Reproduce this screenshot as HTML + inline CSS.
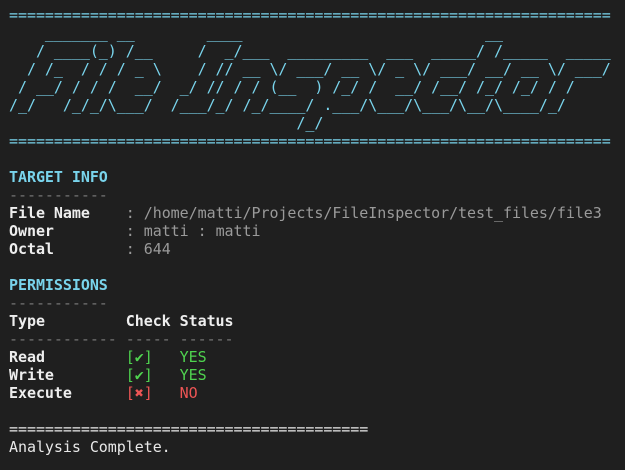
<!DOCTYPE html>
<html><head><meta charset="utf-8"><style>
html,body{margin:0;padding:0;background:#1f1f1f;width:625px;height:470px;overflow:hidden}
pre{margin:0;padding:6px 0 0 9px;font-family:"DejaVu Sans Mono","Liberation Mono",monospace;font-size:15px;line-height:18px;color:#cccccc;letter-spacing:-0.05px}
.c{color:#79d4ec}
.b{color:#eeeeee;font-weight:bold}
.h{color:#79d4ec;font-weight:bold}
.g{color:#9a9a9a}
.d{color:#777777}
.gr{color:#4fd34f}
.r{color:#ee5555}
.w{color:#e8e8e8}
</style></head><body><pre><span class="c">===================================================================
    _______ __        ____                           __
   / ____(_) /__     /  _/___  _________  ___  _____/ /_____  _____
  / /_  / / / _ \    / // __ \/ ___/ __ \/ _ \/ ___/ __/ __ \/ ___/
 / __/ / / /  __/  _/ // / / (__  ) /_/ /  __/ /__/ /_/ /_/ / /
/_/   /_/_/\___/  /___/_/ /_/____/ .___/\___/\___/\__/\____/_/
                                /_/
===================================================================</span>

<span class="h">TARGET INFO</span>
<span class="d">-----------</span>
<span class="b">File Name</span>    <span class="g">: /home/matti/Projects/FileInspector/test_files/file3</span>
<span class="b">Owner</span>        <span class="g">: matti : matti</span>
<span class="b">Octal</span>        <span class="g">: 644</span>

<span class="h">PERMISSIONS</span>
<span class="d">-----------</span>
<span class="b">Type         Check Status</span>
<span class="d">------------ ----- ------</span>
<span class="b">Read</span>         <span class="gr">[✔]   YES</span>
<span class="b">Write</span>        <span class="gr">[✔]   YES</span>
<span class="b">Execute</span>      <span class="r">[✖]   NO</span>

<span class="w">========================================
Analysis Complete.</span></pre></body></html>
